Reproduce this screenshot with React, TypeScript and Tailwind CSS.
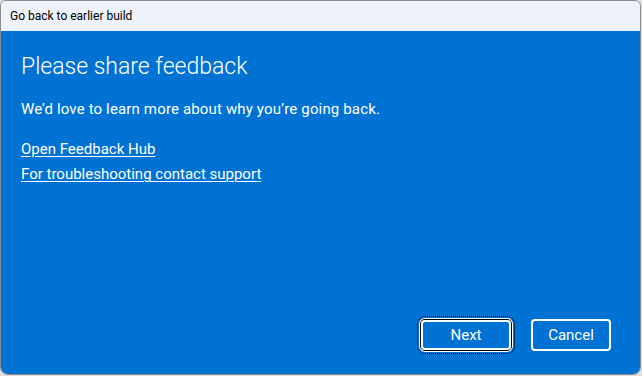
import React from 'react';

const font = { fontFamily: 'Roboto, "Noto Sans", sans-serif' };

export default function App() {
    return (
        <div className="w-[642px] h-[376px] bg-[#dedede] overflow-hidden" style={font}>
            <div className="w-[641px] h-[375px] flex flex-col rounded-t-[6px] rounded-b-[8px] border border-[#8c8c8c] overflow-hidden">
                {/* Title bar */}
                <div className="h-[30px] shrink-0 bg-[#eef2fa] flex items-center pl-[9px] text-[12px] text-black">
                    Go back to earlier build
                </div>

                {/* Content */}
                <div className="flex-1 bg-[#0072d3] text-white flex flex-col px-[20px]">
                    <h1 className="pt-[20px] text-[23px] leading-[32px] font-light">
                        Please share feedback
                    </h1>
                    <p className="mt-[16px] text-[15px] leading-[20px] tracking-[0.15px]">
                        We’d love to learn more about why you’re going back.
                    </p>
                    <div className="mt-[18px] flex flex-col items-start text-[15px] leading-[25px]">
                        <a className="underline underline-offset-[2px] decoration-1 cursor-pointer">Open Feedback Hub</a>
                        <a className="underline underline-offset-[2px] decoration-1 cursor-pointer">For troubleshooting contact support</a>
                    </div>

                    {/* Buttons */}
                    <div className="mt-auto flex justify-end items-center gap-[20px] pr-[9px] pb-[23px]">
                        <button className="w-[90px] h-[30px] rounded-[4px] border-2 border-white text-[15px] text-white shadow-[0_0_0_1px_#000,0_0_0_2px_#fff] outline-1 outline-dotted outline-black outline-offset-[3px]">
                            Next
                        </button>
                        <button className="w-[80px] h-[32px] rounded-[4px] border-2 border-white text-[15px] text-white">
                            Cancel
                        </button>
                    </div>
                </div>
            </div>
        </div>
    );
}
